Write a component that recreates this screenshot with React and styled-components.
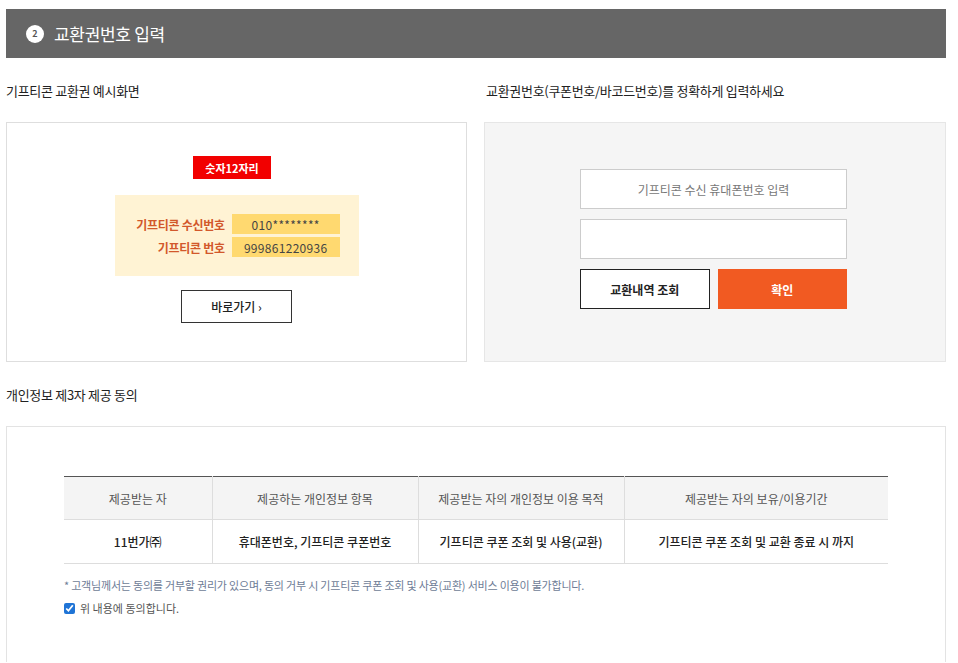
import styled, { createGlobalStyle } from "styled-components";

const GlobalStyle = createGlobalStyle`
  body {
    margin: 0;
    background: #fff;
    font-family: "Noto Sans CJK KR", "Noto Sans", sans-serif;
    color: #222;
  }
`;

const Page = styled.div`
  width: 940px;
  margin: 9px 0 0 6px;
`;

const TitleBar = styled.div`
  height: 49px;
  background: #666;
  display: flex;
  align-items: center;
  padding-left: 20px;
  gap: 10px;
`;

const StepBadge = styled.span`
  width: 18px;
  height: 18px;
  border-radius: 50%;
  background: #fff;
  color: #555;
  font-size: 9px;
  font-weight: 700;
  display: flex;
  align-items: center;
  justify-content: center;
`;

const TitleText = styled.h2`
  margin: 0;
  color: #fff;
  font-size: 17px;
  font-weight: 400;
  letter-spacing: -0.3px;
`;

const Columns = styled.div`
  display: grid;
  grid-template-columns: 461px 462px;
  column-gap: 17px;
`;

const SubTitle = styled.h3`
  margin: 0;
  height: 64px;
  display: flex;
  align-items: center;
  padding-left: ${(p) => p.$indent || 0}px;
  font-size: 13px;
  font-weight: 400;
  color: #222;
  letter-spacing: -0.3px;
`;

const Panel = styled.div`
  box-sizing: border-box;
  height: 240px;
  border: 1px solid ${(p) => (p.$grey ? "#e6e6e6" : "#dedede")};
  background: ${(p) => (p.$grey ? "#f5f5f5" : "#fff")};
  display: flex;
  flex-direction: column;
  align-items: center;
  padding-top: ${(p) => p.$top}px;
  padding-right: ${(p) => (p.$grey ? 3 : 0)}px;
`;

const RedTag = styled.div`
  width: 78px;
  height: 23px;
  background: #f20000;
  color: #fff;
  font-size: 11px;
  font-weight: 700;
  display: flex;
  align-items: center;
  justify-content: center;
  margin-left: -9px;
`;

const Sample = styled.div`
  margin-top: 16px;
  width: 244px;
  height: 81px;
  box-sizing: border-box;
  background: #fff3d4;
  display: grid;
  grid-template-columns: auto 108px;
  justify-content: center;
  align-content: center;
  column-gap: 7px;
  row-gap: 3px;
  padding-left: 3px;
`;

const SampleLabel = styled.span`
  justify-self: end;
  align-self: center;
  font-size: 12px;
  font-weight: 700;
  color: #d2582b;
  letter-spacing: -0.3px;
`;

const SampleValue = styled.span`
  height: 20px;
  background: #ffd970;
  color: #444;
  font-size: 12px;
  letter-spacing: 0.3px;
  display: flex;
  align-items: center;
  justify-content: center;
`;

const GoButton = styled.button`
  margin-top: 14px;
  width: 111px;
  height: 33px;
  background: #fff;
  border: 1px solid #333;
  font-family: inherit;
  font-size: 12px;
  font-weight: 500;
  color: #222;
  cursor: pointer;
`;

const Field = styled.input`
  box-sizing: border-box;
  width: 267px;
  height: 40px;
  border: 1px solid #ccc;
  background: #fff;
  font-family: inherit;
  font-size: 12px;
  text-align: center;
  margin-bottom: 10px;
  outline: none;
  &::placeholder {
    color: #777;
  }
`;

const ButtonRow = styled.div`
  display: flex;
  gap: 8px;
  width: 267px;
`;

const ActionButton = styled.button`
  flex: 1;
  height: 40px;
  box-sizing: border-box;
  font-family: inherit;
  font-size: 12px;
  font-weight: 700;
  cursor: pointer;
  border: 1px solid ${(p) => (p.$primary ? "#f15a22" : "#222")};
  background: ${(p) => (p.$primary ? "#f15a22" : "#fff")};
  color: ${(p) => (p.$primary ? "#fff" : "#222")};
`;

const ConsentBox = styled.div`
  box-sizing: border-box;
  border: 1px solid #e3e3e3;
  border-bottom: none;
  height: 236px;
  padding: 49px 57px 0;
`;

const Table = styled.table`
  width: 100%;
  border-collapse: collapse;
  border-top: 1px solid #555;
  table-layout: fixed;
`;

const Th = styled.th`
  height: 42px;
  padding: 0;
  background: #f4f4f4;
  font-size: 12px;
  font-weight: 400;
  color: #555;
  border-bottom: 1px solid #ddd;
  border-left: 1px solid #ddd;
  &:first-child {
    border-left: none;
  }
`;

const Td = styled.td`
  height: 43px;
  padding: 0;
  text-align: center;
  font-size: 12px;
  font-weight: 500;
  color: #222;
  border-bottom: 1px solid #ddd;
  border-left: 1px solid #ddd;
  &:first-child {
    border-left: none;
  }
`;

const Notice = styled.p`
  margin: 13px 0 0;
  font-size: 11px;
  color: #6e7c96;
  letter-spacing: -0.2px;
`;

const Agree = styled.label`
  margin-top: 7px;
  display: flex;
  align-items: center;
  gap: 5px;
  font-size: 11px;
  color: #555;
`;

const Check = styled.input`
  margin: 0;
  width: 11px;
  height: 11px;
  accent-color: #1f74d6;
`;

const cols = [
  { key: "who", width: "148px" },
  { key: "items", width: "206px" },
  { key: "purpose", width: "206px" },
  { key: "period", width: "264px" },
];

export default function App() {
  return (
    <>
      <GlobalStyle />
      <Page>
        <TitleBar>
          <StepBadge>2</StepBadge>
          <TitleText>교환권번호 입력</TitleText>
        </TitleBar>

        <Columns>
          <div>
            <SubTitle>기프티콘 교환권 예시화면</SubTitle>
            <Panel $top={33}>
              <RedTag>숫자12자리</RedTag>
              <Sample>
                <SampleLabel>기프티콘 수신번호</SampleLabel>
                <SampleValue>010********</SampleValue>
                <SampleLabel>기프티콘 번호</SampleLabel>
                <SampleValue>999861220936</SampleValue>
              </Sample>
              <GoButton>바로가기 ›</GoButton>
            </Panel>
          </div>
          <div>
            <SubTitle $indent={2}>교환권번호(쿠폰번호/바코드번호)를 정확하게 입력하세요</SubTitle>
            <Panel $grey $top={46}>
              <Field placeholder="기프티콘 수신 휴대폰번호 입력" />
              <Field />
              <ButtonRow>
                <ActionButton>교환내역 조회</ActionButton>
                <ActionButton $primary>확인</ActionButton>
              </ButtonRow>
            </Panel>
          </div>
        </Columns>

        <SubTitle>개인정보 제3자 제공 동의</SubTitle>
        <ConsentBox>
          <Table>
            <colgroup>
              {cols.map((c) => (
                <col key={c.key} style={{ width: c.width }} />
              ))}
            </colgroup>
            <thead>
              <tr>
                <Th>제공받는 자</Th>
                <Th>제공하는 개인정보 항목</Th>
                <Th>제공받는 자의 개인정보 이용 목적</Th>
                <Th>제공받는 자의 보유/이용기간</Th>
              </tr>
            </thead>
            <tbody>
              <tr>
                <Td>11번가㈜</Td>
                <Td>휴대폰번호, 기프티콘 쿠폰번호</Td>
                <Td>기프티콘 쿠폰 조회 및 사용(교환)</Td>
                <Td>기프티콘 쿠폰 조회 및 교환 종료 시 까지</Td>
              </tr>
            </tbody>
          </Table>
          <Notice>
            * 고객님께서는 동의를 거부할 권리가 있으며, 동의 거부 시 기프티콘 쿠폰 조회 및 사용(교환) 서비스 이용이 불가합니다.
          </Notice>
          <Agree>
            <Check type="checkbox" defaultChecked />
            위 내용에 동의합니다.
          </Agree>
        </ConsentBox>
      </Page>
    </>
  );
}
